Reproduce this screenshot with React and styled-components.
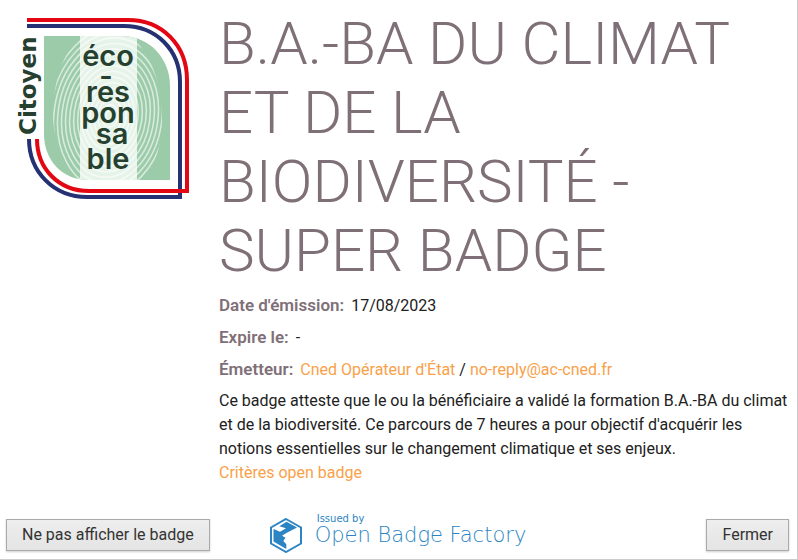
import React from "react";
import styled, { createGlobalStyle } from "styled-components";

const GlobalStyle = createGlobalStyle`
  *, *::before, *::after { box-sizing: border-box; }
  html, body, #root { height: 100%; }
  body {
    margin: 0;
    background: #fff;
    color: #212121;
    font: 400 16px/24px Roboto, sans-serif;
  }
`;

const Dialog = styled.main`
  display: flex;
  flex-direction: column;
  min-height: 100%;
  border: solid #ccc;
  border-width: 0 1px 1px 0;
`;

const Content = styled.div`
  display: grid;
  grid-template-columns: 207px 1fr;
  flex: 1;
  padding: 9px 8px 0 12px;
`;

const BadgeImage = styled.svg`
  display: block;
  width: 178px;
  height: 186px;
  margin-top: 7px;
`;

const Title = styled.h1`
  margin: 0 0 8px;
  color: #7f7078;
  font-size: 60px;
  font-weight: 300;
  line-height: 69px;
  text-transform: uppercase;
`;

const Facts = styled.dl`
  display: grid;
  gap: 8px;
  margin: 0 0 8px;
`;

const Fact = styled.div`
  display: flex;
  align-items: baseline;
  gap: 7px;
  height: 24px;
`;

const Term = styled.dt`
  color: #7f7078;
  font-size: 17px;
  font-weight: 600;
`;

const Value = styled.dd`
  margin: 0;
`;

const Link = styled.a`
  color: #f9a149;
  text-decoration: none;
`;

const Description = styled.p`
  margin: 0;
`;

const Footer = styled.footer`
  display: grid;
  grid-template-columns: 1fr auto 1fr;
  align-items: end;
  padding: 0 8px 6px 6px;
`;

const Button = styled.button`
  justify-self: ${({ $side }) => $side};
  height: 32px;
  margin-bottom: 2px;
  padding: 0 15px;
  border: 1px solid #aaa;
  background: linear-gradient(#eee, #e4e4e4);
  box-shadow: 0 1px 2px rgba(0, 0, 0, 0.2);
  color: #333;
  font: inherit;
`;

const Issuer = styled.div`
  display: flex;
  gap: 12px;
  color: #2b85c4;
`;

const IssuerMark = styled.svg`
  width: 34px;
  height: 36px;
  margin-top: 4px;
`;

const IssuerText = styled.div`
  display: grid;
  align-content: start;
`;

const IssuedBy = styled.span`
  padding-left: 2px;
  font: 10px/12px "DejaVu Sans", sans-serif;
`;

const IssuerName = styled.span`
  font: 200 21px/20px "DejaVu Sans", sans-serif;
`;

const ridges = Array.from({ length: 16 }, (_, i) => 4 + i * 4);

function Badge() {
  return (
    <BadgeImage viewBox="12 16 178 186" role="img" aria-label="Citoyen éco-responsable">
      <defs>
        <clipPath id="leaf">
          <path d="M44 36H122C149 36 170 58 170 86V180H88C62 180 44 160 44 134Z" />
        </clipPath>
        <clipPath id="finger">
          <path d="M53 115C53 70 70 30 107 30S162 75 162 120C162 155 148 185 125 190H90C68 180 53 145 53 115Z" />
        </clipPath>
      </defs>
      <g fill="none" strokeWidth="4">
        <path stroke="#263173" d="M27 26H124C156 26 180 50 180 82V197H87C54 197 29 172 29 139" />
        <path stroke="#e30613" d="M27 20H128C162 20 187 45 187 80V191H89C59 191 37 169 37 139" />
      </g>
      <g clipPath="url(#leaf)">
        <rect x="44" y="36" width="127" height="145" fill="#9bcba8" />
        <rect x="80" y="36" width="57" height="145" fill="#e6f3e9" />
        <g clipPath="url(#finger)" fill="none" stroke="#fff" strokeOpacity="0.6" strokeWidth="1.6">
          {ridges.map((r) => (
            <ellipse key={r} cx="110" cy="116" rx={r} ry={r * 1.4} transform="rotate(8 110 116)" />
          ))}
        </g>
      </g>
      <g fill="#26402f" fontFamily="DejaVu Sans, sans-serif" fontWeight="700">
        <text transform="translate(36 135) rotate(-90)" fontSize="23">Citoyen</text>
        <g fontFamily="Inter, sans-serif" fontWeight="600" fontSize="29" textAnchor="middle">
          <text x="108" y="66">éco</text>
          <text x="106" y="86">-</text>
          <text x="108" y="102">res</text>
          <text x="108" y="123">pon</text>
          <text x="112" y="144">sa</text>
          <text x="108" y="169">ble</text>
        </g>
      </g>
    </BadgeImage>
  );
}

export default function App() {
  return (
    <>
      <GlobalStyle />
      <Dialog>
        <Content>
          <Badge />
          <div>
            <Title>B.A.-BA du climat et de la biodiversité - Super Badge</Title>
            <Facts>
              <Fact>
                <Term>Date d'émission:</Term>
                <Value>17/08/2023</Value>
              </Fact>
              <Fact>
                <Term>Expire le:</Term>
                <Value>-</Value>
              </Fact>
              <Fact>
                <Term>Émetteur:</Term>
                <Value>
                  <Link href="#emetteur">Cned Opérateur d'État</Link> /{" "}
                  <Link href="mailto:no-reply@ac-cned.fr">no-reply@ac-cned.fr</Link>
                </Value>
              </Fact>
            </Facts>
            <Description>
              Ce badge atteste que le ou la bénéficiaire a validé la formation B.A.-BA du climat et
              de la biodiversité. Ce parcours de 7 heures a pour objectif d'acquérir les notions
              essentielles sur le changement climatique et ses enjeux.
            </Description>
            <Link href="#criteres">Critères open badge</Link>
          </div>
        </Content>
        <Footer>
          <Button type="button" $side="start">Ne pas afficher le badge</Button>
          <Issuer>
            <IssuerMark viewBox="0 0 34 36" aria-hidden="true">
              <path d="M17 2L32 10.500V26.500L17 35L2 26.500V10.500Z" fill="none" stroke="currentColor" strokeWidth="2" />
              <path d="M17.500 4.700L28 10.500L16.500 16.500L13 18.700L16.500 20.700L14.300 24L17.300 27.300V32L4.500 24.500V12L11 14.700L17 11.300L10.300 9.300Z" fill="currentColor" />
            </IssuerMark>
            <IssuerText>
              <IssuedBy>Issued by</IssuedBy>
              <IssuerName>Open Badge Factory</IssuerName>
            </IssuerText>
          </Issuer>
          <Button type="button" $side="end">Fermer</Button>
        </Footer>
      </Dialog>
    </>
  );
}
